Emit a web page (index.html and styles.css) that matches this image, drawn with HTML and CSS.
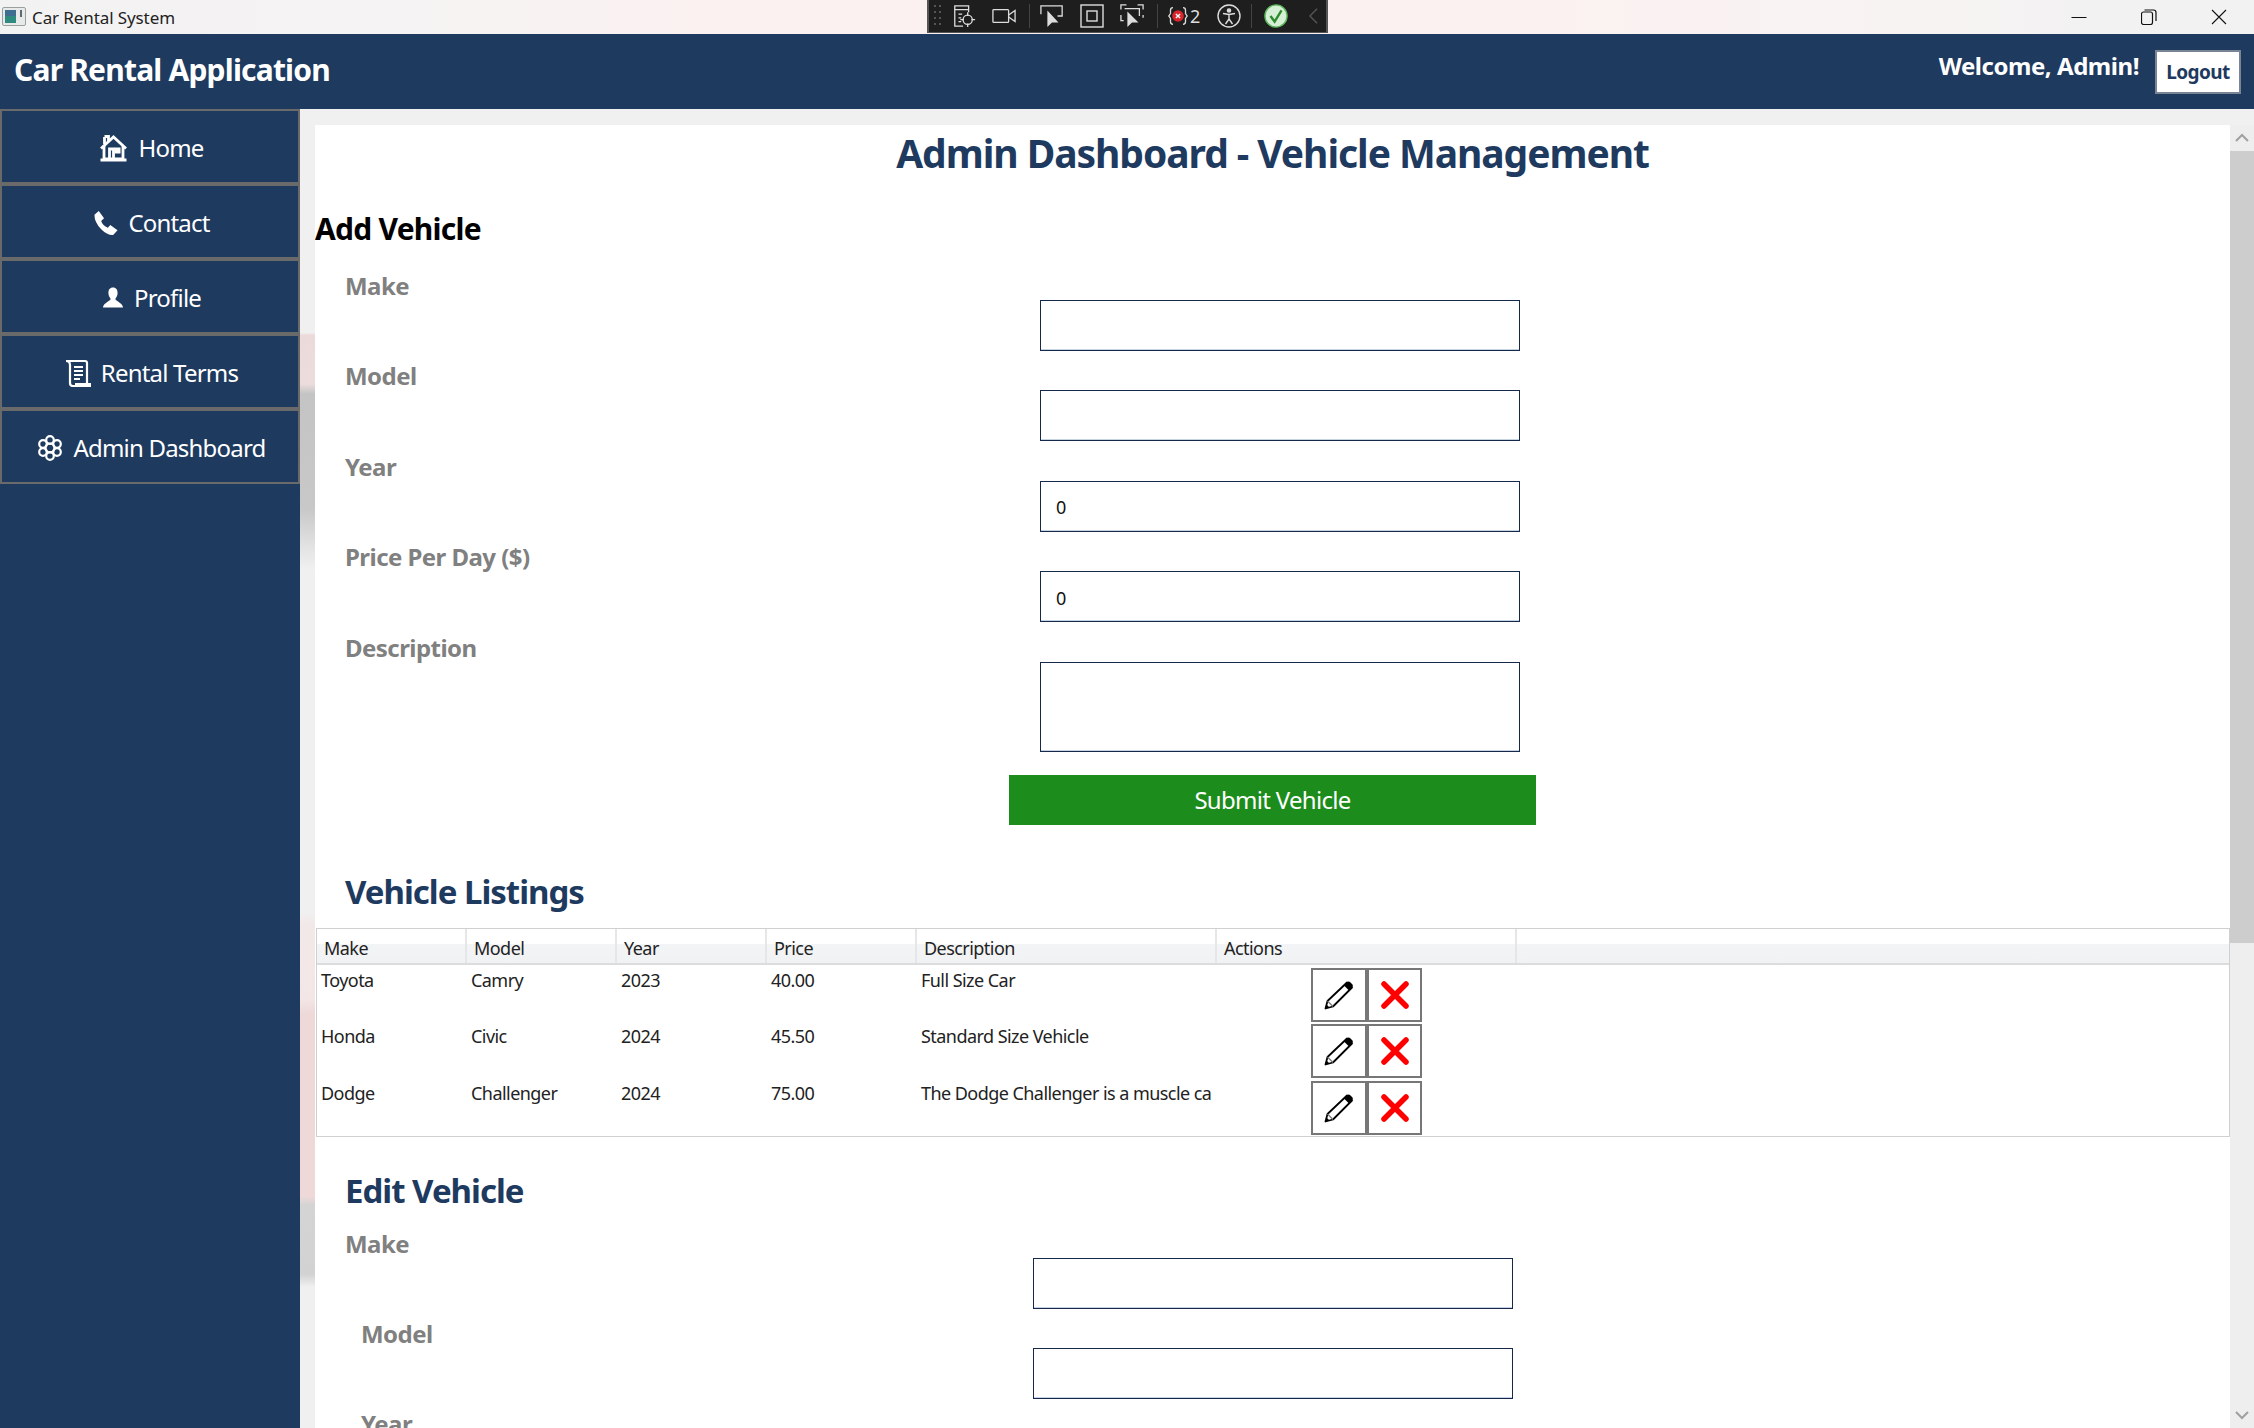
FILE: index.html
```html
<!DOCTYPE html>
<html>
	<head>
		<meta charset="UTF-8">
		<title>Car Rental System</title>
		<link rel="stylesheet" href="styles.css">
	</head>
	<body>
		<div class="window">
			<div class="titlebar">
				<div class="title-left">
					<svg class="app-icon" width="24" height="20" viewBox="0 0 24 20">
						<rect x="0.5" y="0.5" width="23" height="18" rx="1.5" fill="#e8eaea" stroke="#9aa0a0"/>
						<rect x="3" y="3" width="11" height="13" fill="#2f8a80"/>
						<rect x="3" y="3" width="11" height="6" fill="#3f6f90"/>
						<rect x="18" y="3" width="2" height="7" fill="#5a6a70"/>
					</svg>
					<span>Car Rental System</span>
				</div>
				<div class="win-btns">
					<svg width="16" height="16" viewBox="0 0 16 16"><path d="M0.5 8.5H15.5" stroke="#111" fill="none"/></svg>
					<svg width="16" height="16" viewBox="0 0 16 16"><rect x="0.5" y="3" width="11" height="12.5" rx="2" stroke="#111" stroke-width="1.2" fill="none"/><path d="M3.5 1H12.5Q15 1 15 3.5V12" stroke="#111" stroke-width="1.2" fill="none"/></svg>
					<svg width="16" height="16" viewBox="0 0 16 16"><path d="M1 1L15 15M15 1L1 15" stroke="#111" stroke-width="1.1" fill="none"/></svg>
				</div>
				<!-- debug toolbar sits over the title bar -->
				<div class="debug-bar">
					<svg width="8" height="28" viewBox="0 0 8 28"><g fill="#555"><rect x="0" y="3" width="2" height="2"/><rect x="5" y="3" width="2" height="2"/><rect x="0" y="9" width="2" height="2"/><rect x="5" y="9" width="2" height="2"/><rect x="0" y="15" width="2" height="2"/><rect x="5" y="15" width="2" height="2"/><rect x="0" y="21" width="2" height="2"/><rect x="5" y="21" width="2" height="2"/></g></svg>
					<svg width="24" height="26" viewBox="0 0 26 26" fill="none" stroke="#ddd" stroke-width="1.4"><path d="M18 9V2H3V24H12"/><path d="M3 6H18M7 11H11M7 15H10M7 19H10"/><circle cx="17" cy="17" r="5"/><path d="M17 9V13M17 21V25M9 17H13M21 17H25"/></svg>
					<svg class="dbg-wide" width="24" height="18" viewBox="0 0 26 18" fill="none" stroke="#ddd" stroke-width="1.4"><rect x="1" y="2" width="17" height="14" rx="1"/><path d="M18 8L25 3V15L18 10"/></svg>
					<i class="dbg-sep dbg-mid"></i>
					<svg width="24" height="26" viewBox="0 0 26 26" fill="none" stroke="#ddd" stroke-width="1.4"><path d="M1 11V2H24V13H19M1 2V11"/><path d="M8 7V25L13 20H20Z" fill="#ddd" stroke="none"/></svg>
					<svg class="dbg-wide" width="24" height="24" viewBox="0 0 24 24" fill="none" stroke="#ddd" stroke-width="1.4"><rect x="1" y="1" width="22" height="22"/><rect x="7" y="7" width="10" height="10"/></svg>
					<svg class="dbg-wide" width="24" height="28" viewBox="0 0 26 28" fill="none" stroke="#ddd" stroke-width="1.4"><path d="M1 7V2H7M19 2H25V7M1 13V19H4M25 13V16M5 6H21V14"/><path d="M8 9V26L13 21H20Z" fill="#ddd" stroke="none"/></svg>
					<i class="dbg-sep dbg-mid"></i>
					<div class="dbg-err">
						<svg width="20" height="22" viewBox="0 0 24 24"><path d="M6 2Q3 2 3 5V9L1 12L3 15V19Q3 22 6 22M18 2Q21 2 21 5V9L23 12L21 15V19Q21 22 18 22" fill="none" stroke="#ddd" stroke-width="1.6"/><circle cx="12" cy="12" r="7" fill="#d9252b"/><path d="M9.5 9.5L14.5 14.5M14.5 9.5L9.5 14.5" stroke="#fff" stroke-width="1.6"/></svg>
						<span>2</span>
					</div>
					<svg class="dbg-acc" width="24" height="24" viewBox="0 0 24 24" fill="none" stroke="#ddd" stroke-width="1.4"><circle cx="12" cy="12" r="11"/><circle cx="12" cy="6.5" r="1.6" fill="#ddd"/><path d="M6 9.5L12 10.5L18 9.5M12 10.5V15M12 15L8.5 20M12 15L15.5 20"/></svg>
					<i class="dbg-sep"></i>
					<svg class="dbg-ok" width="24" height="24" viewBox="0 0 26 26"><circle cx="13" cy="13" r="12" fill="#d6f0d6" stroke="#5cb85c" stroke-width="1.5"/><path d="M7 13L11.5 19L19 7" fill="none" stroke="#2e8b2e" stroke-width="2.6"/></svg>
					<svg class="dbg-c" width="9" height="18" viewBox="0 0 10 18"><path d="M9 1L1 9L9 17" fill="none" stroke="#555" stroke-width="1.6"/></svg>
				</div>
			</div>

			<div class="header">
				<div class="app-name">Car Rental Application</div>
				<div class="user-box">
					<span class="welcome">Welcome, Admin!</span>
					<button class="logout">Logout</button>
				</div>
			</div>

			<div class="body">
				<div class="sidebar">
					<a class="nav-item">
						<svg width="29" height="28" viewBox="0 0 28 28" fill="none" stroke="#fff" stroke-width="2.8"><path d="M1.5 14.5L14 3L26.5 14.5"/><path d="M5 3V10M5 2.5H9V7M4.5 12V25H23.5V12"/><path d="M10 25V15H14V25"/><rect x="15" y="13.5" width="6" height="6" fill="#fff" stroke="none"/><path d="M1 26H27" stroke-width="3"/></svg>
						<span>Home</span>
					</a>
					<a class="nav-item">
						<svg width="25" height="26" viewBox="0 0 26 26"><path d="M1.5 4.5L6 0.5L11.5 8L8.5 11Q10 16 15.5 18L18 15L25.5 20.5L21 25.5Q15 26 8.5 19.5Q1.5 12.5 1.5 4.5Z" fill="#fff"/></svg>
						<span>Contact</span>
					</a>
					<a class="nav-item">
						<svg width="22" height="23" viewBox="0 0 24 24"><path d="M12 1C8.5 1 7 3.5 7 7C7 10 8.5 12 9.5 13.5C9 16 2 17 1 23H23C22 17 15 16 14.5 13.5C15.5 12 17 10 17 7C17 3.5 15.5 1 12 1Z" fill="#fff"/></svg>
						<span>Profile</span>
					</a>
					<a class="nav-item">
						<svg width="26" height="28" viewBox="0 0 26 28" fill="none" stroke="#fff" stroke-width="2.2"><path d="M1 2H20Q22 2 22 4V24"/><path d="M1 2Q5 2 5 6V24Q5 27 8 27H25V25H10"/><path d="M9 8H18M9 12H18M9 16H18M9 20H15" stroke-width="1.8"/></svg>
						<span>Rental Terms</span>
					</a>
					<a class="nav-item">
						<svg width="26" height="26" viewBox="0 0 26 26" fill="none" stroke="#fff" stroke-width="2.2"><circle cx="13" cy="13" r="4.5"/><circle cx="13" cy="5" r="3.8"/><circle cx="13" cy="21" r="3.8"/><circle cx="6" cy="9" r="3.8"/><circle cx="20" cy="9" r="3.8"/><circle cx="6" cy="17" r="3.8"/><circle cx="20" cy="17" r="3.8"/></svg>
						<span>Admin Dashboard</span>
					</a>
				</div>

				<div class="main">
					<div class="panel">
						<h1 class="page-title">Admin Dashboard - Vehicle Management</h1>
						<h2 class="add-title">Add Vehicle</h2>

						<div class="form">
							<div class="field"><label>Make</label><input class="input" type="text"></div>
							<div class="field"><label>Model</label><input class="input" type="text"></div>
							<div class="field"><label>Year</label><input class="input" type="text" value="0"></div>
							<div class="field"><label>Price Per Day ($)</label><input class="input" type="text" value="0"></div>
							<div class="field field-desc"><label>Description</label><textarea class="input area"></textarea></div>
						</div>
						<div class="submit-row"><button class="submit">Submit Vehicle</button></div>

						<h2 class="section-title listings">Vehicle Listings</h2>
						<div class="table">
							<div class="thead">
								<div class="th">Make</div>
								<div class="th">Model</div>
								<div class="th">Year</div>
								<div class="th">Price</div>
								<div class="th th-wide">Description</div>
								<div class="th th-wide">Actions</div>
							</div>
							<div class="row">
								<div class="td">Toyota</div>
								<div class="td">Camry</div>
								<div class="td">2023</div>
								<div class="td">40.00</div>
								<div class="td td-wide">Full Size Car</div>
								<div class="actions">
									<button class="icon-btn"><svg width="32" height="32"><use href="#pencil"/></svg></button>
									<button class="icon-btn"><svg width="32" height="32"><use href="#cross"/></svg></button>
								</div>
							</div>
							<div class="row">
								<div class="td">Honda</div>
								<div class="td">Civic</div>
								<div class="td">2024</div>
								<div class="td">45.50</div>
								<div class="td td-wide">Standard Size Vehicle</div>
								<div class="actions">
									<button class="icon-btn"><svg width="32" height="32"><use href="#pencil"/></svg></button>
									<button class="icon-btn"><svg width="32" height="32"><use href="#cross"/></svg></button>
								</div>
							</div>
							<div class="row">
								<div class="td">Dodge</div>
								<div class="td">Challenger</div>
								<div class="td">2024</div>
								<div class="td">75.00</div>
								<div class="td td-wide">The Dodge Challenger is a muscle ca</div>
								<div class="actions">
									<button class="icon-btn"><svg width="32" height="32"><use href="#pencil"/></svg></button>
									<button class="icon-btn"><svg width="32" height="32"><use href="#cross"/></svg></button>
								</div>
							</div>
						</div>

						<h2 class="section-title edit">Edit Vehicle</h2>
						<div class="form form-edit">
							<div class="field"><label>Make</label><input class="input" type="text"></div>
							<div class="field"><label class="indent">Model</label><input class="input" type="text"></div>
							<div class="field"><label class="indent">Year</label><input class="input" type="text"></div>
						</div>
					</div>
					<div class="scrollbar">
						<svg width="24" height="26" viewBox="0 0 24 26"><path d="M6 16L12 10L18 16" fill="none" stroke="#a0a0a0" stroke-width="2"/></svg>
						<div class="thumb"></div>
						<div class="track"></div>
						<svg width="24" height="26" viewBox="0 0 24 26"><path d="M6 10L12 16L18 10" fill="none" stroke="#a0a0a0" stroke-width="2"/></svg>
					</div>
				</div>
			</div>
		</div>

		<svg class="defs" width="0" height="0">
			<symbol id="pencil" viewBox="0 0 32 32">
				<path d="M24 3.5L29 8.5L10 27.5L2.5 29.5L4.5 22Z" fill="#fff" stroke="#000" stroke-width="1.8" stroke-linejoin="round"/>
				<path d="M24 3.5Q25.5 2 27 3L29.5 5.5Q30.5 7 29 8.5L26 11.5L21 6.5Z" fill="#000"/>
				<path d="M4.5 22L10 27.5" stroke="#777" stroke-width="1.2"/>
				<path d="M2.5 29.5L3.5 25.5L6.5 28.5Z" fill="#000"/>
			</symbol>
			<symbol id="cross" viewBox="0 0 32 32">
				<path d="M5 5L27 27M27 5L5 27" stroke="#f00" stroke-width="5.5" stroke-linecap="round" fill="none"/>
			</symbol>
		</svg>
	</body>
</html>
```

FILE: styles.css
```css
*{padding: 0;margin: 0;box-sizing: border-box;}
html,body{height:100%;overflow: hidden;}
body{font-family: "Noto Sans","Open Sans",sans-serif;background: #f0f0f0;}
button{font-family: inherit;}
.defs{display: block;}

.window{height:1428px;display: flex;flex-direction: column;}

/* title bar */
.titlebar{height:34px;flex:none;position: relative;display: flex;justify-content: space-between;align-items: center;background: linear-gradient(90deg,#f3f2f2 0,#f5f3f3 18%,#fbf1f1 32%,#fbf1f1 68%,#f8f3f3 84%,#f3f2f2 92%);}
.title-left{display: flex;align-items: center;gap:6px;padding-left:2px;font-size:17px;letter-spacing:-0.1px;color:#222;}
.win-btns{display: flex;gap:54px;padding-right:27px;align-items: center;}
.debug-bar{position: absolute;left:927px;top:0;width:401px;height:33px;background: #1e1e1e;border:2px solid #555;border-top: 0;border-bottom-width: 1px;display: flex;align-items: center;gap:10px;padding-left:5px;}
.dbg-wide{margin-left:6px;}
.dbg-mid{margin-left:3px;}
.dbg-acc{margin-left:7px;}
.dbg-ok{margin-left:2px;}
.dbg-sep{width:1px;height:24px;background: #444;}
.dbg-err{display: flex;align-items: center;gap:2px;color:#ddd;font-size:18px;}
.dbg-c{margin-left:11px;}

/* header */
.header{height:75px;flex:none;background: #1e3a5f;color:#fff;display: flex;justify-content: space-between;align-items: center;padding:0 13px 0 14px;}
.app-name{font-size:30px;font-weight: 700;letter-spacing:-0.8px;margin-top:-4px;}
.user-box{display: flex;align-items: center;gap:16px;}
.welcome{font-size:24px;font-weight: 700;letter-spacing:-0.45px;margin-top:-12px;}
.logout{width:86px;height:44px;background: #fff;border:2px solid #7a8494;color:#1e3a5f;font-size:19px;font-weight: 700;letter-spacing:-0.6px;}

.body{flex:1;display: flex;min-height:0;}

/* sidebar */
.sidebar{width:300px;flex:none;background: #1e3a5f;}
.nav-item{height:75px;display: flex;align-items: center;justify-content: center;gap:10px;border:2px solid #6a6a6a;padding:2px 0 0 3px;color:#fff;font-size:24px;letter-spacing:-0.8px;}

/* main */
.main{flex:1;display: flex;padding-top:16px;min-width:0;background: linear-gradient(180deg,#f0f0f0 0,#f0f0f0 224px,#ecdada 226px,#ecdcdc 275px,#c4c4c4 285px,#c8c8c8 400px,#e4e4e4 440px,#f0f0f0 460px,#f0f0f0 804px,#f3e8e8 815px,#f3e6e6 890px,#eed8d8 905px,#eed8d8 1088px,#d4d4d4 1096px,#d2d2d2 1165px,#f0f0f0 1178px);}
.panel{flex:1;margin-left:15px;background: #fff;overflow: hidden;min-width:0;}
.page-title{height:57px;color:#1e3a5f;font-size:39px;font-weight: 700;letter-spacing:-1.05px;text-align: center;line-height:56px;}
.add-title{font-size:30px;font-weight: 700;letter-spacing:-0.75px;color:#000;margin-top:26px;line-height:41px;}

.form{padding:0 0 0 30px;margin-top:19px;}
.field{height:90.4px;display: flex;justify-content: space-between;}
.field label{width:695px;flex:none;font-size:24px;font-weight: 700;letter-spacing:-0.55px;color:#808080;line-height:34px;margin-top:1px;}
.field-desc{height:auto;}
.input{width:480px;height:51px;margin:32px 0 0;border:1px solid #16294a;box-shadow:inset 0 -1px #c5d3e3;background: #fff;padding:2px 15px 0;font:18px "Noto Sans",sans-serif;letter-spacing:-0.4px;color:#111;outline: none;resize: none;display: block;}
.field .input{margin-right:auto;}
.area{height:90px;}
.submit-row{display: flex;padding-left:694px;margin-top:23px;}
.submit{width:527px;height:50px;background: #1c8c1c;border:0;color:#fff;font-size:24px;letter-spacing:-0.7px;}

.section-title{color:#1e3a5f;font-size:33px;font-weight: 700;letter-spacing:-1px;padding-left:30px;line-height:46px;}
.listings{margin-top:44px;}

/* table */
.table{height:209px;margin-top:13px;margin-left:1px;border:1px solid #d0d0d0;font-size:18px;letter-spacing:-0.55px;color:#222;}
.thead{height:36px;display: flex;background: linear-gradient(180deg,#fff 0,#fff 45%,#f3f4f6 45%,#f1f2f4 100%);border-bottom:2px solid #dcdcdc;}
.th{width:150px;padding:7px 0 0 7px;border-right:2px solid #e6e6e8;line-height:24px;}
.th-wide{width:300px;}
.row{height:56.5px;display: flex;}
.td{width:150px;padding:1px 0 0 4px;line-height:28px;white-space: nowrap;overflow: hidden;}
.td-wide{width:300px;}
.actions{display: flex;padding:3px 0 0 94px;gap:0;}
.icon-btn{width:56px;height:54px;background: #fff;border:2px solid #777;display: flex;align-items: center;justify-content: center;}
.icon-btn + .icon-btn{width:55px;}

.edit{margin-top:31px;}
.form-edit{margin-top:12px;}
.form-edit .field label{width:688px;}
.form-edit .field label.indent{padding-left:16px;}

/* scrollbar */
.scrollbar{width:24px;flex:none;background: #eeeeee;display: flex;flex-direction: column;}
.thumb{height:792px;background: #cdcdcd;flex:none;}
.track{flex:1;}
```
